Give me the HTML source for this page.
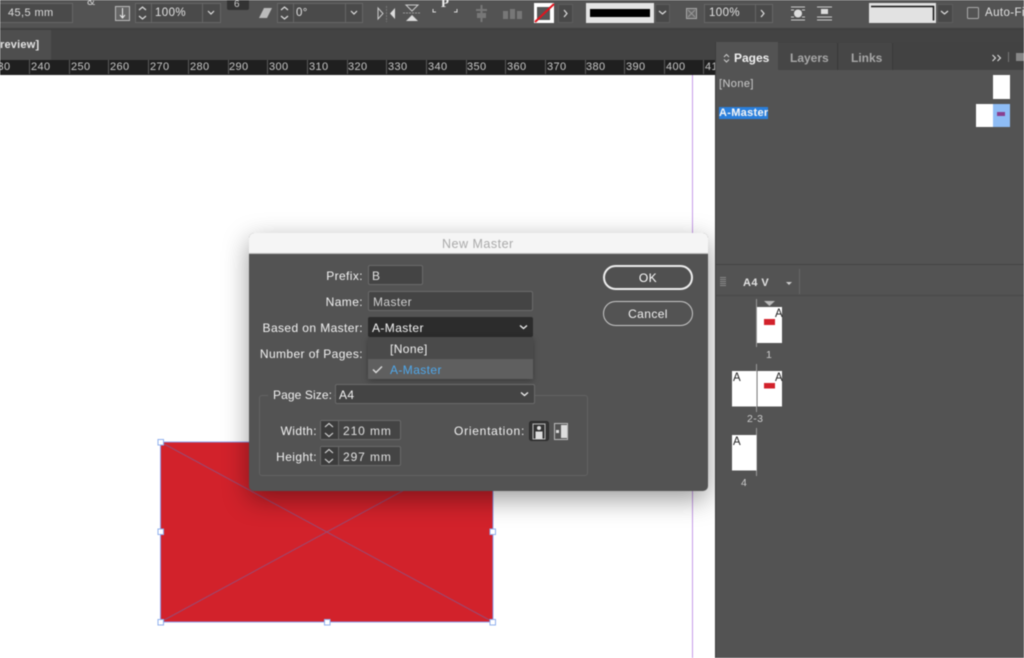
<!DOCTYPE html>
<html><head><meta charset="utf-8"><style>
html,body{margin:0;padding:0;width:1024px;height:658px;overflow:hidden;background:#fff}
#w{position:absolute;left:0;top:0;width:1024px;height:658px;overflow:hidden;filter:blur(.4px);font-family:"Liberation Sans",sans-serif;font-size:12px;color:#e6e6e6;background:#fff}
#w div{position:absolute;box-sizing:border-box}
.t{position:absolute;white-space:nowrap;line-height:14px;letter-spacing:.4px}
.box{border:1px solid #666;background:#4a4a4a}
.tk{position:absolute;top:60px;width:1px;height:14px;background:#5a5a5a}
.rl{position:absolute;top:60px;color:#c8c8c8;font-size:11px;line-height:14px;letter-spacing:.4px;white-space:nowrap}
svg{position:absolute;overflow:visible}
.r{text-align:right}
.f{border:1px solid #6a6a6a;background:#444;border-radius:2px}
</style></head><body><div id="w">
<!-- toolbar -->
<div style="left:0;top:0;width:1024px;height:29px;background:#535353"></div>
<div style="left:0;top:28px;width:1024px;height:2px;background:#3f3f3f"></div>
<div style="left:0;top:30px;width:1024px;height:30px;background:#434343"></div>
<div style="left:0;top:30px;width:51px;height:30px;background:#4e4e4e"></div>
<div class="t" style="left:0;top:38px;font-weight:bold;font-size:11px;color:#e4e4e4;letter-spacing:.2px">review]</div>

<div class="box" style="left:-3px;top:3px;width:76px;height:20px"></div>
<div class="t" style="left:8px;top:6px;font-size:11px;color:#ddd">45,5 mm</div>
<div class="t" style="left:87px;top:-6px;font-size:12px;color:#ccc">&amp;</div>
<svg style="left:0;top:0" width="1024" height="29">
 <rect x="115.500" y="6.500" width="14" height="14" fill="#666" stroke="#bbb"/><path d="M122.500 8v9M120 15l2.500 3 2.500-3" stroke="#eee" fill="none"/>
 <rect x="135.500" y="3.500" width="85" height="19" fill="#4a4a4a" stroke="#666"/><path d="M151.500 3v20M202.500 3v20" stroke="#666"/>
 <path d="M139 10l3.500-3 3.500 3M139 16l3.500 3 3.500-3M208 11l3 3 3-3" fill="none" stroke="#ddd" stroke-width="1.200"/>
 <rect x="227" y="-5" width="22" height="15" rx="2" fill="#333"/>
 <path d="M259 18l5-10h8l-5 10z" fill="#bbb"/>
 <rect x="277.500" y="3.500" width="85" height="19" fill="#4a4a4a" stroke="#666"/><path d="M293.500 3v20M345.500 3v20" stroke="#666"/>
 <path d="M281 10l3.500-3 3.500 3M281 16l3.500 3 3.500-3M351 11l3 3 3-3" fill="none" stroke="#ddd" stroke-width="1.200"/>
 <path d="M378 8v11l5-5.500z" fill="none" stroke="#ccc"/><path d="M395 8v11l-5-5.500z" fill="#ddd"/><path d="M386.500 6v16" stroke="#777" stroke-dasharray="2 1"/>
 <path d="M406 5h12l-6 6z" fill="none" stroke="#ccc"/><path d="M406 21h12l-6-6z" fill="#ddd"/><path d="M403 13h18" stroke="#999" stroke-dasharray="2 1"/>
 <path d="M433 9v3h3M457 9v3h-3" fill="none" stroke="#ddd"/>
 <g fill="#777"><rect x="480.500" y="5" width="2" height="17"/><rect x="476" y="9" width="11" height="2"/><rect x="477" y="13" width="9" height="5"/><rect x="503" y="11" width="5" height="8"/><rect x="510" y="9" width="5" height="10"/><rect x="517" y="11" width="5" height="8"/></g>
 <rect x="534" y="3" width="20" height="20" fill="#fff"/><rect x="537" y="7" width="13" height="13" fill="#555"/><path d="M535 22l19-18" stroke="#e0141e" stroke-width="2"/>
 <rect x="558.500" y="4.500" width="14" height="18" fill="#484848" stroke="#5c5c5c"/><path d="M564 10l3 3.500-3 3.500" fill="none" stroke="#ddd" stroke-width="1.200"/>
 <rect x="586" y="3" width="68" height="20" fill="#e4e4e4"/><rect x="590" y="9" width="60" height="8" fill="#000"/>
 <rect x="655.500" y="4.500" width="14" height="18" fill="#484848" stroke="#5c5c5c"/><path d="M659 11l3.500 3 3.500-3" fill="none" stroke="#ddd" stroke-width="1.200"/>
 <rect x="686.500" y="8.500" width="10" height="10" fill="#666" stroke="#aaa"/><path d="M688 10l7 7M695 10l-7 7" stroke="#999"/>
 <rect x="704.500" y="4.500" width="68" height="18" fill="#4a4a4a" stroke="#666"/><path d="M755.500 4v19" stroke="#666"/><path d="M761 10l3 3.500-3 3.500" fill="none" stroke="#ddd" stroke-width="1.200"/>
 <path d="M791 7h14M791 20h14M791 10h3M802 10h3M791 17h3M802 17h3" stroke="#ccc"/><circle cx="798" cy="13.500" r="4" fill="#ddd"/>
 <path d="M817 7h15M817 20h15M817 17h15" stroke="#ccc"/><rect x="821" y="9" width="7" height="5" fill="#ddd"/>
 <rect x="869" y="3" width="67" height="20" fill="#e2e2e2"/><path d="M871 6.500h62.500v14" fill="none" stroke="#111" stroke-width="1.500"/>
 <rect x="937.500" y="4.500" width="15" height="18" fill="#484848" stroke="#5c5c5c"/><path d="M941 11l3.500 3 3.500-3" fill="none" stroke="#ddd" stroke-width="1.200"/>
 <rect x="967.500" y="7.500" width="11" height="11" rx="1" fill="none" stroke="#aaa"/>
 <text x="441" y="7" font-size="13" font-weight="bold" fill="#eee" font-family="Liberation Serif">P</text>
 <text x="234" y="7" font-size="10" fill="#ccc" font-family="Liberation Sans">6</text>
</svg>
<div class="t" style="left:155px;top:6px;font-size:11.500px;color:#e2e2e2">100%</div>
<div class="t" style="left:296px;top:6px;font-size:11.500px;color:#e2e2e2">0°</div>
<div class="t" style="left:709px;top:6px;font-size:11.500px;color:#e2e2e2">100%</div>
<div class="t" style="left:985px;top:6px;font-size:11.500px;color:#e2e2e2">Auto-Fit</div>

<!-- ruler -->
<div style="left:0;top:60px;width:715px;height:15px;background:#1f1f1f"></div>
<div class="rl" style="left:-9px">230</div>
<i class="tk" style="left:29px"></i><div class="rl" style="left:31px">240</div>
<i class="tk" style="left:69px"></i><div class="rl" style="left:71px">250</div>
<i class="tk" style="left:108px"></i><div class="rl" style="left:110px">260</div>
<i class="tk" style="left:148px"></i><div class="rl" style="left:150px">270</div>
<i class="tk" style="left:188px"></i><div class="rl" style="left:190px">280</div>
<i class="tk" style="left:228px"></i><div class="rl" style="left:229px">290</div>
<i class="tk" style="left:267px"></i><div class="rl" style="left:269px">300</div>
<i class="tk" style="left:307px"></i><div class="rl" style="left:309px">310</div>
<i class="tk" style="left:347px"></i><div class="rl" style="left:348px">320</div>
<i class="tk" style="left:386px"></i><div class="rl" style="left:388px">330</div>
<i class="tk" style="left:426px"></i><div class="rl" style="left:428px">340</div>
<i class="tk" style="left:466px"></i><div class="rl" style="left:467px">350</div>
<i class="tk" style="left:505px"></i><div class="rl" style="left:507px">360</div>
<i class="tk" style="left:545px"></i><div class="rl" style="left:547px">370</div>
<i class="tk" style="left:585px"></i><div class="rl" style="left:586px">380</div>
<i class="tk" style="left:624px"></i><div class="rl" style="left:626px">390</div>
<i class="tk" style="left:664px"></i><div class="rl" style="left:666px">400</div>
<i class="tk" style="left:703px"></i><div class="rl" style="left:705px">410</div>

<!-- canvas -->
<div style="left:692px;top:75px;width:1px;height:583px;background:#c79be8"></div>
<svg style="left:0;top:0" width="715" height="658">
 <rect x="160.500" y="442" width="332.500" height="180" fill="#d2222b" stroke="#8f9be8"/>
 <path d="M160.500 442L493 622M160.500 622L493 442" stroke="#9a4a72" stroke-width="1"/>
 <g fill="#fff" stroke="#8fb0ee"><rect x="158" y="439.500" width="5.500" height="5.500"/><rect x="158" y="529" width="5.500" height="5.500"/><rect x="158" y="619.500" width="5.500" height="5.500"/><rect x="324.500" y="619.500" width="5.500" height="5.500"/><rect x="490" y="529" width="5.500" height="5.500"/><rect x="490" y="619.500" width="5.500" height="5.500"/></g>
</svg>

<!-- dialog -->
<div style="left:249px;top:233px;width:459px;height:258px;border-radius:5px;background:#535353;box-shadow:0 8px 26px rgba(0,0,0,.4);overflow:hidden">
 <div style="left:0;top:0;width:459px;height:21px;background:#f5f5f5;border-bottom:1px solid #bbb"></div>
</div>
<div class="t" style="left:442px;top:237px;color:#aaa;font-size:12.500px;letter-spacing:.5px">New Master</div>
<div class="t r" style="left:250px;width:113px;top:269px;color:#f2f2f2">Prefix:</div>
<div class="t r" style="left:250px;width:113px;top:295px;color:#f2f2f2">Name:</div>
<div class="t r" style="left:250px;width:113px;top:321px;color:#f2f2f2">Based on Master:</div>
<div class="t r" style="left:250px;width:113px;top:347px;color:#f2f2f2">Number of Pages:</div>
<div class="f" style="left:368px;top:265px;width:55px;height:20px"></div>
<div class="t" style="left:372px;top:269px;color:#e0e0e0">B</div>
<div class="f" style="left:368px;top:291px;width:165px;height:20px"></div>
<div class="t" style="left:373px;top:295px;color:#d0d0d0">Master</div>
<div style="left:368px;top:317px;width:165px;height:20px;background:#2c2c2c;border-radius:2px"></div>
<div class="t" style="left:372px;top:321px;color:#f4f4f4">A-Master</div>
<svg style="left:0;top:0" width="1024" height="658">
 <path d="M520 325.500l3.500 3 3.500-3" fill="none" stroke="#eee" stroke-width="1.300"/>
</svg>
<div style="left:368px;top:337px;width:165px;height:42px;background:#4a4a4a;box-shadow:0 2px 6px rgba(0,0,0,.3)"></div>
<div style="left:368px;top:359px;width:165px;height:20px;background:#5f5f5f"></div>
<div class="t" style="left:390px;top:342px;color:#f2f2f2">[None]</div>
<div class="t" style="left:390px;top:363px;color:#4fa7ea">A-Master</div>
<svg style="left:0;top:0" width="1024" height="658"><path d="M373 369.500l3 3 6-6" fill="none" stroke="#ddd" stroke-width="1.400"/></svg>

<div style="left:259px;top:395px;width:329px;height:81px;border:1px solid #626262;border-radius:3px"></div>
<div style="left:268px;top:385px;width:66px;height:18px;background:#535353"></div>
<div class="t" style="left:273px;top:388px;color:#f2f2f2;letter-spacing:.1px">Page Size:</div>
<div class="f" style="left:335px;top:384px;width:200px;height:20px"></div>
<div class="t" style="left:339px;top:388px;color:#f4f4f4">A4</div>
<svg style="left:0;top:0" width="1024" height="658"><path d="M521 392.500l3.500 3 3.500-3" fill="none" stroke="#eee" stroke-width="1.300"/></svg>

<div class="t r" style="left:250px;width:67px;top:424px;color:#f2f2f2">Width:</div>
<div class="t r" style="left:250px;width:67px;top:450px;color:#f2f2f2">Height:</div>
<div class="f" style="left:320px;top:420px;width:81px;height:20px"></div>
<div class="f" style="left:320px;top:446px;width:81px;height:20px"></div>
<div style="left:321px;top:421px;width:17px;height:18px;background:#3c3c3c"></div>
<div style="left:321px;top:447px;width:17px;height:18px;background:#3c3c3c"></div>
<svg style="left:0;top:0" width="1024" height="658">
 <path d="M325 427l4-3.500 4 3.500M325 433l4 3.500 4-3.500M325 453l4-3.500 4 3.500M325 459l4 3.500 4-3.500" fill="none" stroke="#ddd" stroke-width="1.100"/>
 <path d="M338.500 420v20M338.500 446v20" stroke="#666"/>
 <rect x="529.500" y="421.500" width="19" height="19" rx="2" fill="#333" stroke="#2a2a2a"/>
 <rect x="533" y="424" width="12" height="15" fill="none" stroke="#bbb"/><circle cx="539" cy="428" r="2" fill="#ddd"/><path d="M535.500 439v-7.500h7V439z" fill="#ddd"/>
 <rect x="554.500" y="423.500" width="13" height="16" fill="none" stroke="#bbb"/><rect x="561" y="425" width="6" height="13" fill="#ddd"/><rect x="556" y="430" width="3" height="3" fill="#ddd"/>
</svg>
<div class="t" style="left:343px;top:424px;color:#e2e2e2;letter-spacing:.9px">210 mm</div>
<div class="t" style="left:343px;top:450px;color:#e2e2e2;letter-spacing:.9px">297 mm</div>
<div class="t" style="left:454px;top:424px;color:#f2f2f2;letter-spacing:.75px">Orientation:</div>

<div style="left:603px;top:265px;width:90px;height:25px;border:2px solid #eee;border-radius:13px;background:#505050"></div>
<div class="t" style="left:603px;width:90px;text-align:center;top:271px;color:#fff">OK</div>
<div style="left:603px;top:301px;width:90px;height:25px;border:1px solid #c8c8c8;border-radius:13px"></div>
<div class="t" style="left:603px;width:90px;text-align:center;top:307px;color:#f2f2f2">Cancel</div>

<!-- panel -->
<div style="left:715px;top:42px;width:309px;height:616px;background:#535353;border-left:1px solid #3c3c3c"></div>
<div style="left:716px;top:42px;width:308px;height:28px;background:#424242"></div>
<div style="left:716px;top:42px;width:62px;height:29px;background:#535353"></div>
<div style="left:778px;top:43px;width:60px;height:27px;background:#464646;border-right:1px solid #3a3a3a"></div>
<div style="left:839px;top:43px;width:54px;height:27px;background:#464646;border-right:1px solid #3a3a3a"></div>
<svg style="left:0;top:0" width="1024" height="658">
 <path d="M724 57l2.500-2.500 2.500 2.500M724 59.500l2.500 2.500 2.500-2.500" fill="none" stroke="#ccc"/>
 <path d="M992.500 55l3 3-3 3M997.500 55l3 3-3 3" fill="none" stroke="#ddd" stroke-width="1.100"/>
 <path d="M1008.500 52v10" stroke="#777"/><rect x="1016" y="53" width="8" height="8" fill="#888"/>
 <path d="M716 264.500h308" stroke="#444"/><path d="M716 295.500h308" stroke="#484848"/>
 <path d="M720 277.500h6M720 279.500h6M720 281.500h6M720 283.500h6M720 285.500h6" stroke="#9a9a9a" stroke-width=".8"/>
 <path d="M786 282h6l-3 3z" fill="#ccc"/><path d="M799.500 269v25" stroke="#666"/>
</svg>
<div class="t" style="left:734px;top:51px;font-weight:bold;color:#f0f0f0;letter-spacing:0">Pages</div>
<div class="t" style="left:790px;top:51px;font-weight:bold;color:#a8a8a8;letter-spacing:0">Layers</div>
<div class="t" style="left:851px;top:51px;font-weight:bold;color:#a8a8a8;letter-spacing:0">Links</div>
<div class="t" style="left:719px;top:77px;font-size:11px;color:#ccc">[None]</div>
<div style="left:719px;top:107px;width:49px;height:12px;background:#2a7fdc"></div>
<div class="t" style="left:719px;top:106px;font-size:11px;color:#f6f6f6;font-weight:bold;letter-spacing:.3px">A-Master</div>
<div style="left:993px;top:75px;width:17px;height:24px;background:#fff"></div>
<div style="left:976px;top:104px;width:17px;height:23px;background:#fff"></div>
<div style="left:993px;top:104px;width:17px;height:23px;background:#8ebcf5"></div>
<div style="left:997px;top:112px;width:8px;height:4px;background:#8a3f8e"></div>

<div class="t" style="left:743px;top:276px;font-size:11px;font-weight:bold;color:#e2e2e2">A4 V</div>
<!-- thumbs -->
<svg style="left:0;top:0" width="1024" height="658">
 <path d="M764 301h11l-5.500 5z" fill="#bbb"/>
 <path d="M756.500 299v48M756.500 364v48M756.500 428v48" stroke="#999"/>
 <rect x="757" y="307" width="25" height="36" fill="#fff"/>
 <rect x="732" y="371" width="24.500" height="35.500" fill="#fff"/><rect x="757.500" y="371" width="24.500" height="35.500" fill="#fff"/>
 <rect x="732" y="435" width="24.500" height="35.500" fill="#fff"/>
 <rect x="764" y="319" width="11" height="6" fill="#d2222b"/><rect x="764" y="383" width="11" height="5.500" fill="#d2222b"/>
</svg>
<div class="t" style="left:775px;top:307px;font-size:11.500px;color:#222;letter-spacing:0">A</div>
<div class="t" style="left:733px;top:371px;font-size:11.500px;color:#222;letter-spacing:0">A</div>
<div class="t" style="left:775px;top:371px;font-size:11.500px;color:#222;letter-spacing:0">A</div>
<div class="t" style="left:733px;top:435px;font-size:11.500px;color:#222;letter-spacing:0">A</div>
<div class="t" style="left:766px;top:348px;font-size:10.500px;color:#ccc">1</div>
<div class="t" style="left:747px;top:412px;font-size:10.500px;color:#ccc">2-3</div>
<div class="t" style="left:741px;top:476px;font-size:10.500px;color:#ccc">4</div>
</div></body></html>
